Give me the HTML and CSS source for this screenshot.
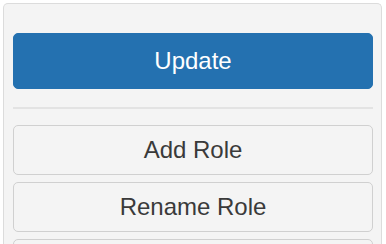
FILE: index.html
```html
<!DOCTYPE html>
<html>
<head>
<meta charset="utf-8">
<link rel="stylesheet" href="styles.css">
</head>
<body>
<div class="panel">
  <button class="btn btn-primary">Update</button>
  <hr class="sep">
  <div class="list">
    <button class="btn btn-default">Add Role</button>
    <button class="btn btn-default">Rename Role</button>
    <button class="btn btn-default" aria-label="More"></button>
  </div>
</div>
</body>
</html>
```
FILE: styles.css
```css
html, body {
  margin: 0;
  background: #ffffff;
  height: 244px;
  overflow: hidden;
}
.panel {
  margin: 3px 4px 0 3px;
  height: 300px;
  border: 1px solid #dcdcdc;
  border-bottom: none;
  border-radius: 5px 5px 0 0;
  background: #f4f4f4;
  padding: 29px 8px 0 9px;
  box-sizing: border-box;
  display: flex;
  flex-direction: column;
}
.btn {
  display: block;
  width: 100%;
  font-family: "Liberation Sans", Arial, sans-serif;
  font-size: 24px;
  border-radius: 5px;
  cursor: pointer;
  margin: 0;
  padding: 0;
}
.btn-primary {
  height: 56px;
  background: #2471b0;
  border: 1px solid #2471b0;
  color: #ffffff;
}
.sep {
  border: none;
  border-top: 2px solid #e3e3e3;
  margin: 18px 0 16px 0;
  height: 0;
}
.list {
  display: flex;
  flex-direction: column;
  gap: 7px;
}
.btn-default {
  height: 50px;
  background: #f4f4f4;
  border: 1px solid #d0d0d0;
  color: #3a3a3a;
}
```
